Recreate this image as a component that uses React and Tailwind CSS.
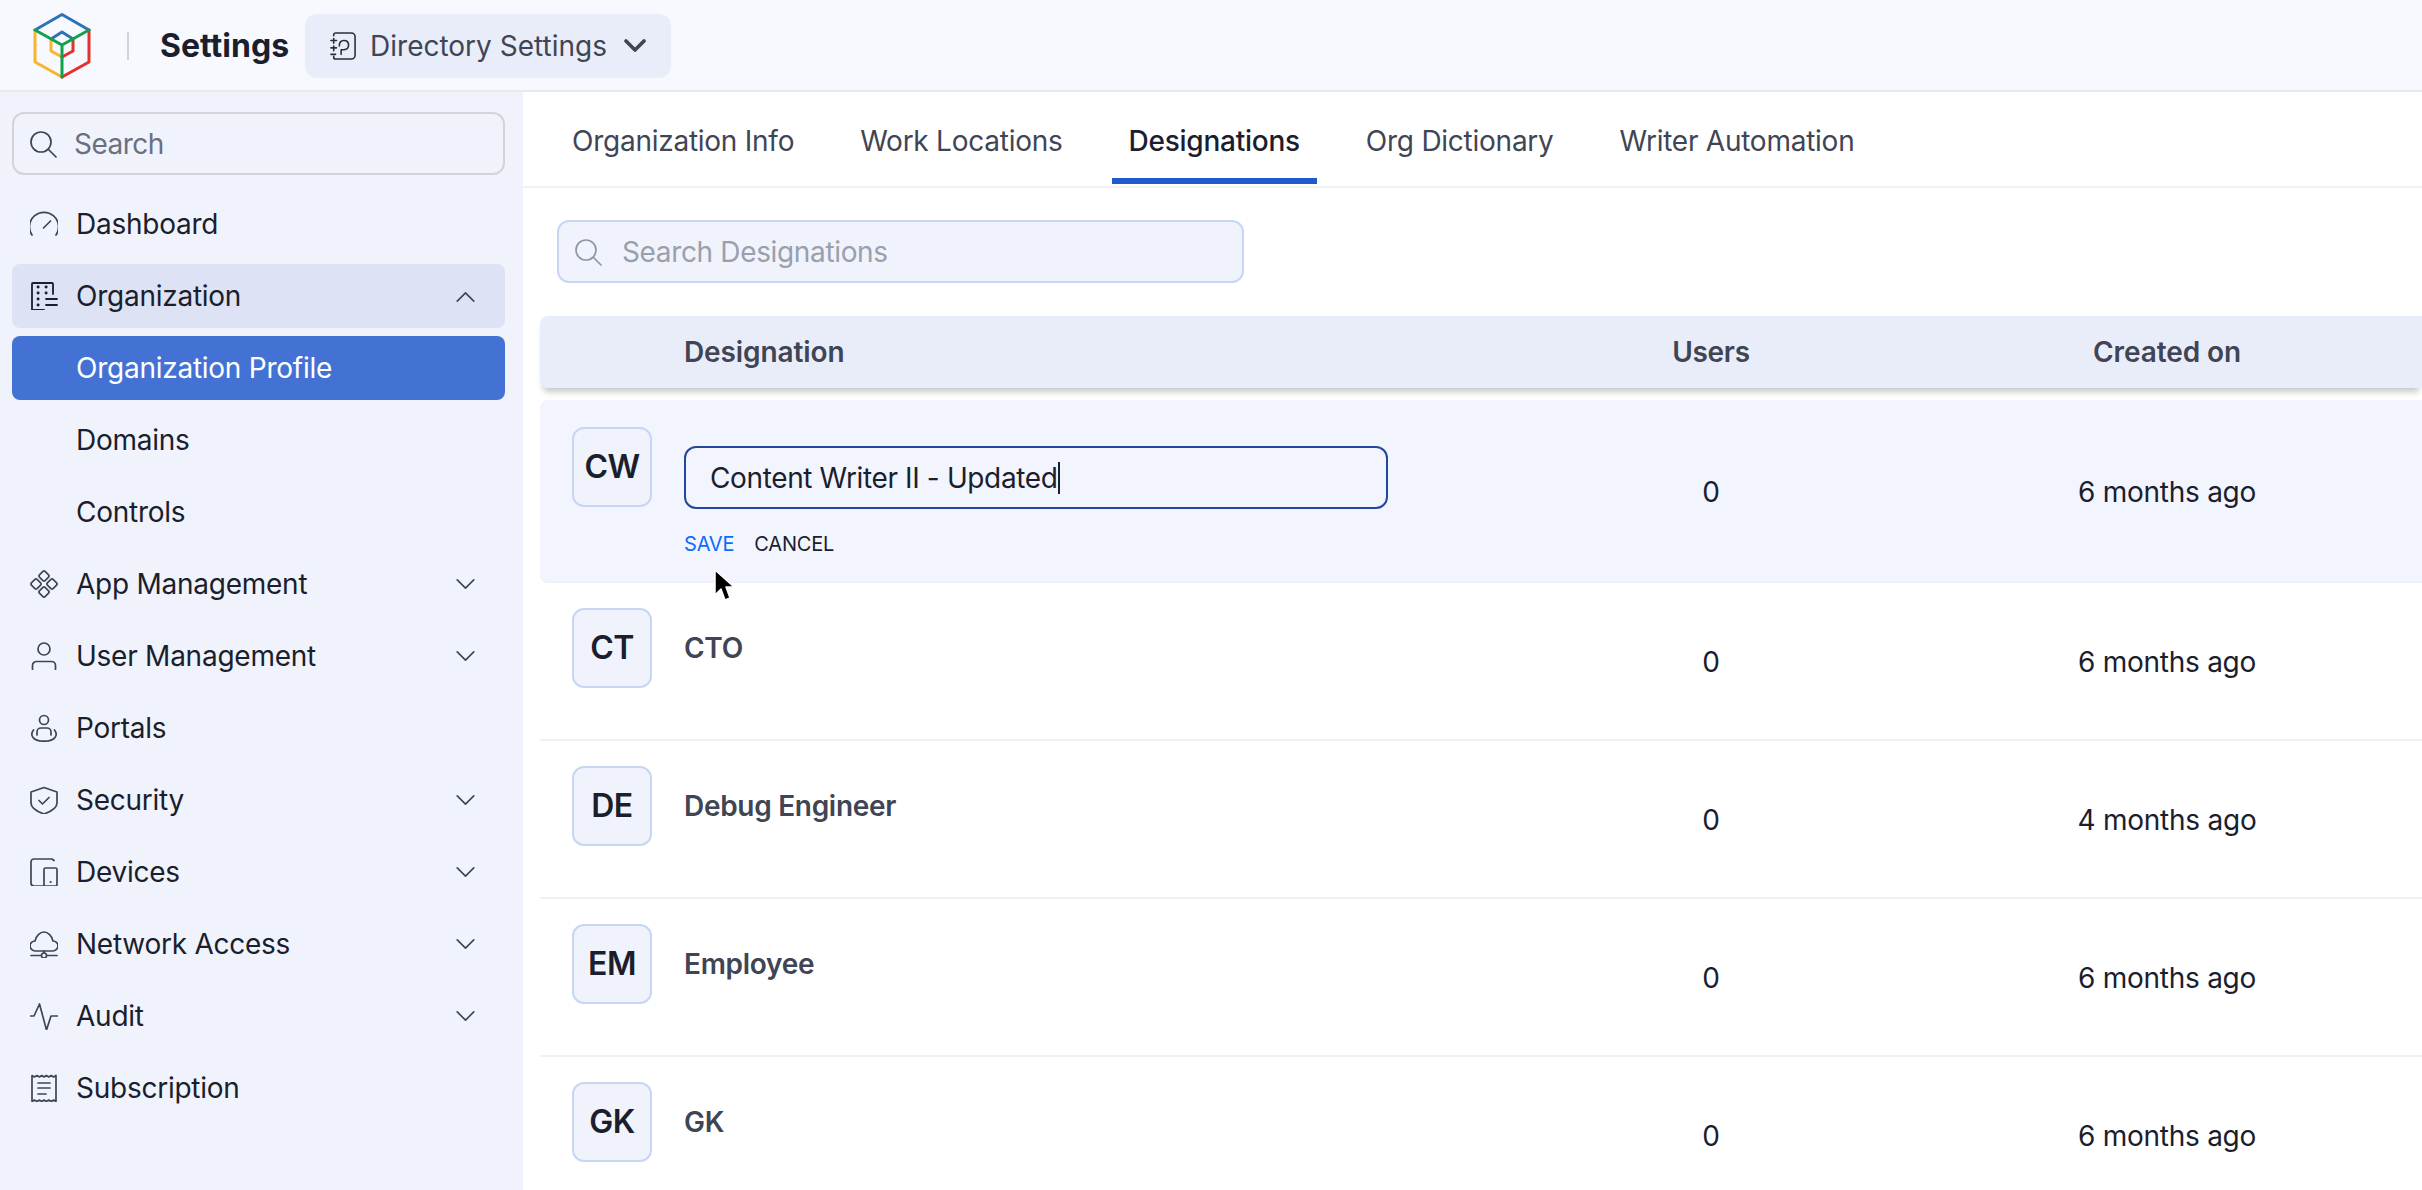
import React from 'react';

const ink = '#3f4554';

const Glyph = ({ children, className = 'w-7 h-7' }) => (
  <svg viewBox="0 0 28 28" fill="none" stroke={ink} strokeWidth="1.7" strokeLinecap="round" strokeLinejoin="round" className={`${className} shrink-0`}>
    {children}
  </svg>
);

const SearchGlyph = ({ color }) => (
  <svg viewBox="0 0 28 28" fill="none" stroke={color} strokeWidth="1.7" strokeLinecap="round" className="w-7 h-7 shrink-0">
    <circle cx="12" cy="12" r="10" />
    <path d="M19.5 19.5 27 27" />
  </svg>
);

const Chevron = ({ up }) => (
  <svg viewBox="0 0 20 12" fill="none" stroke={ink} strokeWidth="1.8" strokeLinecap="round" strokeLinejoin="round" className="w-[19px] h-[11px] shrink-0">
    <path d={up ? 'M1 11 10 2l9 9' : 'M1 1l9 9 9-9'} />
  </svg>
);

const icons = {
  dashboard: (
    <Glyph>
      <path d="M2 25A14.500 14.500 0 1 1 26 25" />
      <path d="M13.500 18l7-7" />
    </Glyph>
  ),
  organization: (
    <svg viewBox="0 0 28 28" fill="none" stroke="#1b1e2c" strokeWidth="1.8" strokeLinecap="round" strokeLinejoin="round" className="w-7 h-7 shrink-0">
      <path d="M23 12V2a1 1 0 0 0-1-1H3a1 1 0 0 0-1 1v26h12" />
      <path d="M16 17h11M16 23h11" />
      <path d="M8 5h.2M16 5h.2M8 11h.2M16 11h.2M8 17h.2M8 23h.2" strokeWidth="2.800" />
    </svg>
  ),
  apps: (
    <Glyph>
      <rect x="10" y="2" width="8" height="8" rx="1.500" transform="rotate(45 14 6)" />
      <rect x="10" y="18" width="8" height="8" rx="1.500" transform="rotate(45 14 22)" />
      <rect x="2" y="10" width="8" height="8" rx="1.500" transform="rotate(45 6 14)" />
      <rect x="18" y="10" width="8" height="8" rx="1.500" transform="rotate(45 22 14)" />
    </Glyph>
  ),
  user: (
    <Glyph>
      <circle cx="14" cy="7" r="6" />
      <path d="M2.500 27.500v-4a4 4 0 0 1 4-4h15a4 4 0 0 1 4 4v4" />
    </Glyph>
  ),
  portals: (
    <Glyph>
      <circle cx="14" cy="6" r="4.500" />
      <path d="M7 21v-3a4 4 0 0 1 4-4h6a4 4 0 0 1 4 4v3" />
      <path d="M3.500 16C-1 22 4 27.200 14 27.200S29 22 24.500 16" />
    </Glyph>
  ),
  security: (
    <Glyph>
      <path d="M14 1.500 27 6v11c0 4.500-6 8.500-13 11C7 25.500 1 21.500 1 17V6z" />
      <path d="M9 14.500l3.500 3.500 6.500-6.500" />
    </Glyph>
  ),
  devices: (
    <Glyph>
      <path d="M24 2.500 22 1H4a3 3 0 0 0-3 3v21a3 3 0 0 0 3 3h10" />
      <rect x="14" y="10" width="13" height="18" rx="1.500" />
      <path d="M20.500 24h.2" strokeWidth="2" />
    </Glyph>
  ),
  network: (
    <Glyph>
      <path d="M6 21c-3 0-6-2-6-5 0-3 2.500-5 5-5 1-5 5-9 9-9s8 4 9 9c2.500 0 5 2 5 5 0 3-3 5-6 5H6z" />
      <path d="M14 21v2M1 25.500h10M17 25.500h10" />
      <circle cx="14" cy="25.500" r="2.500" />
    </Glyph>
  ),
  audit: (
    <Glyph>
      <path d="M0 14h4l5.500-12 7 26 4.500-14h7" />
    </Glyph>
  ),
  subscription: (
    <Glyph>
      <path d="M2 1.500l2.400 1.500L7 1.500 9.400 3l2.400-1.500L14 3l2.400-1.500L18.800 3l2.400-1.500L23.600 3l2.400-1.500v26l-2.400-1.500-2.400 1.500-2.400-1.500-2.400 1.500L14 26l-2.400 1.500L9.400 26 7 27.500 4.400 26 2 27.500z" />
      <path d="M8 9h12M8 14h12M8 20h8" />
    </Glyph>
  ),
};

const NavRow = ({ icon, label, chevron, active, open }) => (
  <div className={`flex items-center h-16 pl-[18px] pr-[30px] rounded-lg ${open ? 'bg-[#dde2f5]' : ''} ${active ? 'bg-[#4472d4] text-white' : 'text-[#1b1e2c]'}`}>
    <span className="w-7 h-7 mr-[18px] shrink-0 flex items-center justify-center">{icon}</span>
    <span className="flex-1 text-[28px] leading-none tracking-[-0.25px]">{label}</span>
    {chevron && <Chevron up={open} />}
  </div>
);

const tabs = [
  { label: 'Organization Info' },
  { label: 'Work Locations' },
  { label: 'Designations', active: true },
  { label: 'Org Dictionary' },
  { label: 'Writer Automation' },
];

const rows = [
  { initials: 'CT', name: 'CTO', when: '6 months ago' },
  { initials: 'DE', name: 'Debug Engineer', when: '4 months ago' },
  { initials: 'EM', name: 'Employee', when: '6 months ago' },
  { initials: 'GK', name: 'GK', when: '6 months ago' },
];

const Avatar = ({ text }) => (
  <div className="w-20 h-20 rounded-xl border-2 border-[#c6d6f3] bg-[#f0f3fc] flex items-center justify-center text-[32px] font-semibold tracking-[-0.5px] text-[#1b1e2c] shrink-0">
    {text}
  </div>
);

export default function App() {
  return (
    <div className="h-screen overflow-hidden flex flex-col bg-white" style={{ fontFamily: 'Inter, sans-serif' }}>
      {/* top bar */}
      <header className="h-[92px] shrink-0 flex items-center bg-[#f8f9fe] border-b-2 border-[#e7e8ec] pt-[2px]">
        <svg viewBox="0 0 60 68" fill="none" strokeWidth="3" strokeLinecap="round" strokeLinejoin="round" className="w-[60px] h-[68px] ml-[32px] mt-[2px] shrink-0">
          <path d="M3 17 30 1.500 57 17" stroke="#2a73b8" />
          <path d="M19 26 30 19l11 7" stroke="#2a73b8" />
          <path d="M19 26v12l11 6" stroke="#f7b52d" />
          <path d="M41 26v12l-11 6" stroke="#e2322e" />
          <path d="M3 17v32l27 15" stroke="#f7b52d" />
          <path d="M57 17v32L30 64" stroke="#e2322e" />
          <path d="M3 17l27 15 27-15M30 32v32" stroke="#11a14d" />
        </svg>
        <div className="w-[2px] h-7 bg-[#d2d3d6] ml-[35px] shrink-0" />
        <span className="ml-[31px] text-[32px] font-bold text-[#1b1e2c]">Settings</span>
        <div className="ml-[16px] w-[366px] h-16 rounded-xl bg-[#e9edf9] flex items-center pl-[25px]">
          <svg viewBox="0 0 28 30" fill="none" stroke="#2b2e3a" strokeWidth="1.700" strokeLinecap="round" strokeLinejoin="round" className="w-[26px] h-[28px] shrink-0">
            <path d="M4 4V3a2 2 0 0 1 2-2h17a4 4 0 0 1 4 4v20a4 4 0 0 1-4 4H6a2 2 0 0 1-2-2v-1" />
            <path d="M1 9h6M4 7v5M1 17h6M4 15v5M1 24h5" />
            <path d="M10 15c0-4 2-6 5-6s5 2 5 5-2 5-5 5h-3v5" />
          </svg>
          <span className="ml-[14px] w-[254px] text-[28px] leading-none text-[#3f4554]">Directory Settings</span>
          <svg viewBox="0 0 22 14" fill="none" stroke="#3f4554" strokeWidth="3.600" strokeLinecap="round" strokeLinejoin="round" className="w-[22px] h-[14px] shrink-0">
            <path d="M2 2l9 9 9-9" />
          </svg>
        </div>
      </header>

      <div className="flex flex-1 min-h-0">
        {/* sidebar */}
        <aside className="w-[523px] shrink-0 bg-[#f0f3fc] pl-3 pr-[18px] pt-5">
          <div className="h-[63px] rounded-xl border-2 border-[#d3d4d8] flex items-center pl-[15px] mb-[17px]">
            <SearchGlyph color="#3f4554" />
            <span className="ml-[17px] text-[28px] leading-none tracking-[-0.5px] text-[#6b7080]">Search</span>
          </div>
          <nav className="flex flex-col gap-2">
            <NavRow icon={icons.dashboard} label="Dashboard" />
            <NavRow icon={icons.organization} label="Organization" chevron open />
            <NavRow label="Organization Profile" active />
            <NavRow label="Domains" />
            <NavRow label="Controls" />
            <NavRow icon={icons.apps} label="App Management" chevron />
            <NavRow icon={icons.user} label="User Management" chevron />
            <NavRow icon={icons.portals} label="Portals" />
            <NavRow icon={icons.security} label="Security" chevron />
            <NavRow icon={icons.devices} label="Devices" chevron />
            <NavRow icon={icons.network} label="Network Access" chevron />
            <NavRow icon={icons.audit} label="Audit" chevron />
            <NavRow icon={icons.subscription} label="Subscription" />
          </nav>
        </aside>

        {/* main */}
        <main className="flex-1 min-w-0 bg-white">
          <div className="h-24 border-b-2 border-[#f1f1f3] flex gap-8 pl-[32px]">
            {tabs.map((t) => (
              <div key={t.label} className={`h-[92px] pt-3 px-[17px] flex items-center border-b-[6px] text-[28px] leading-none tracking-[-0.25px] ${t.active ? 'border-[#2159cc] text-[#1b1e2c] font-medium' : 'border-transparent text-[#3f4554]'}`}>
                {t.label}
              </div>
            ))}
          </div>

          <div className="ml-[34px] mt-8 w-[687px] h-[63px] rounded-xl border-2 border-[#c6d6f3] bg-[#f0f3fc] flex items-center pl-[15px]">
            <SearchGlyph color="#9096a3" />
            <span className="ml-[20px] text-[28px] leading-none tracking-[-0.35px] text-[#9a9fac]">Search Designations</span>
          </div>

          <div className="ml-[17px] mt-[33px]">
            <div className="h-[72px] flex items-center rounded-l-lg bg-[#e9edf9] shadow-[0_7px_6px_-3px_rgba(0,0,0,0.22)] text-[28px] font-semibold tracking-[-0.1px] text-[#3f4554]">
              <span className="ml-[144px] w-[877px]">Designation</span>
              <span className="w-[300px] text-center tracking-[-0.3px]">Users</span>
              <span className="ml-[156px] w-[300px] text-center">Created on</span>
            </div>

            {/* row being edited */}
            <div className="relative mt-3 h-[183px] flex rounded-l-lg bg-[#f2f5fe] border-b-2 border-[#f0f1f4] text-[28px] text-[#1b1e2c] tracking-[-0.25px]">
              <div className="ml-[32px] mt-[27px] mr-[32px]"><Avatar text="CW" /></div>
              <div className="w-[877px] pt-[46px]">
                <div className="w-[704px] h-[63px] rounded-xl border-2 border-[#23479b] flex items-center pl-[24px] leading-none tracking-[-0.37px]">
                  <span>Content Writer II - Updated</span>
                  <span className="w-[2px] h-8 bg-[#1b1e2c]" />
                </div>
                <div className="flex gap-5 mt-[25px] text-[20px] leading-none tracking-[-0.2px]">
                  <span className="text-[#0a6cff]">SAVE</span>
                  <span className="text-[#1b1e2c]">CANCEL</span>
                </div>
              </div>
              <span className="w-[300px] mt-[2px] text-center self-center">0</span>
              <span className="ml-[156px] mt-[2px] w-[300px] text-center self-center">6 months ago</span>
              <svg viewBox="0 0 22 34" className="absolute left-[173px] top-[169px] w-[22px] h-[34px]">
                <path d="M2 1v25l6-6 4 11 5-2-4-11h8z" fill="#000" stroke="#fff" strokeWidth="1.500" strokeLinejoin="round" />
              </svg>
            </div>

            {rows.map((r) => (
              <div key={r.initials} className="h-[158px] flex border-b-2 border-[#f1f1f3] text-[28px] text-[#1b1e2c] tracking-[-0.25px]">
                <div className="ml-[32px] mr-[32px] mt-[25px]"><Avatar text={r.initials} /></div>
                <span className="w-[877px] mt-[25px] h-20 flex items-center font-semibold tracking-[-0.3px] text-[#3f4554]">{r.name}</span>
                <span className="w-[300px] mt-[2px] text-center self-center">0</span>
                <span className="ml-[156px] mt-[2px] w-[300px] text-center self-center">{r.when}</span>
              </div>
            ))}
          </div>
        </main>
      </div>
    </div>
  );
}
